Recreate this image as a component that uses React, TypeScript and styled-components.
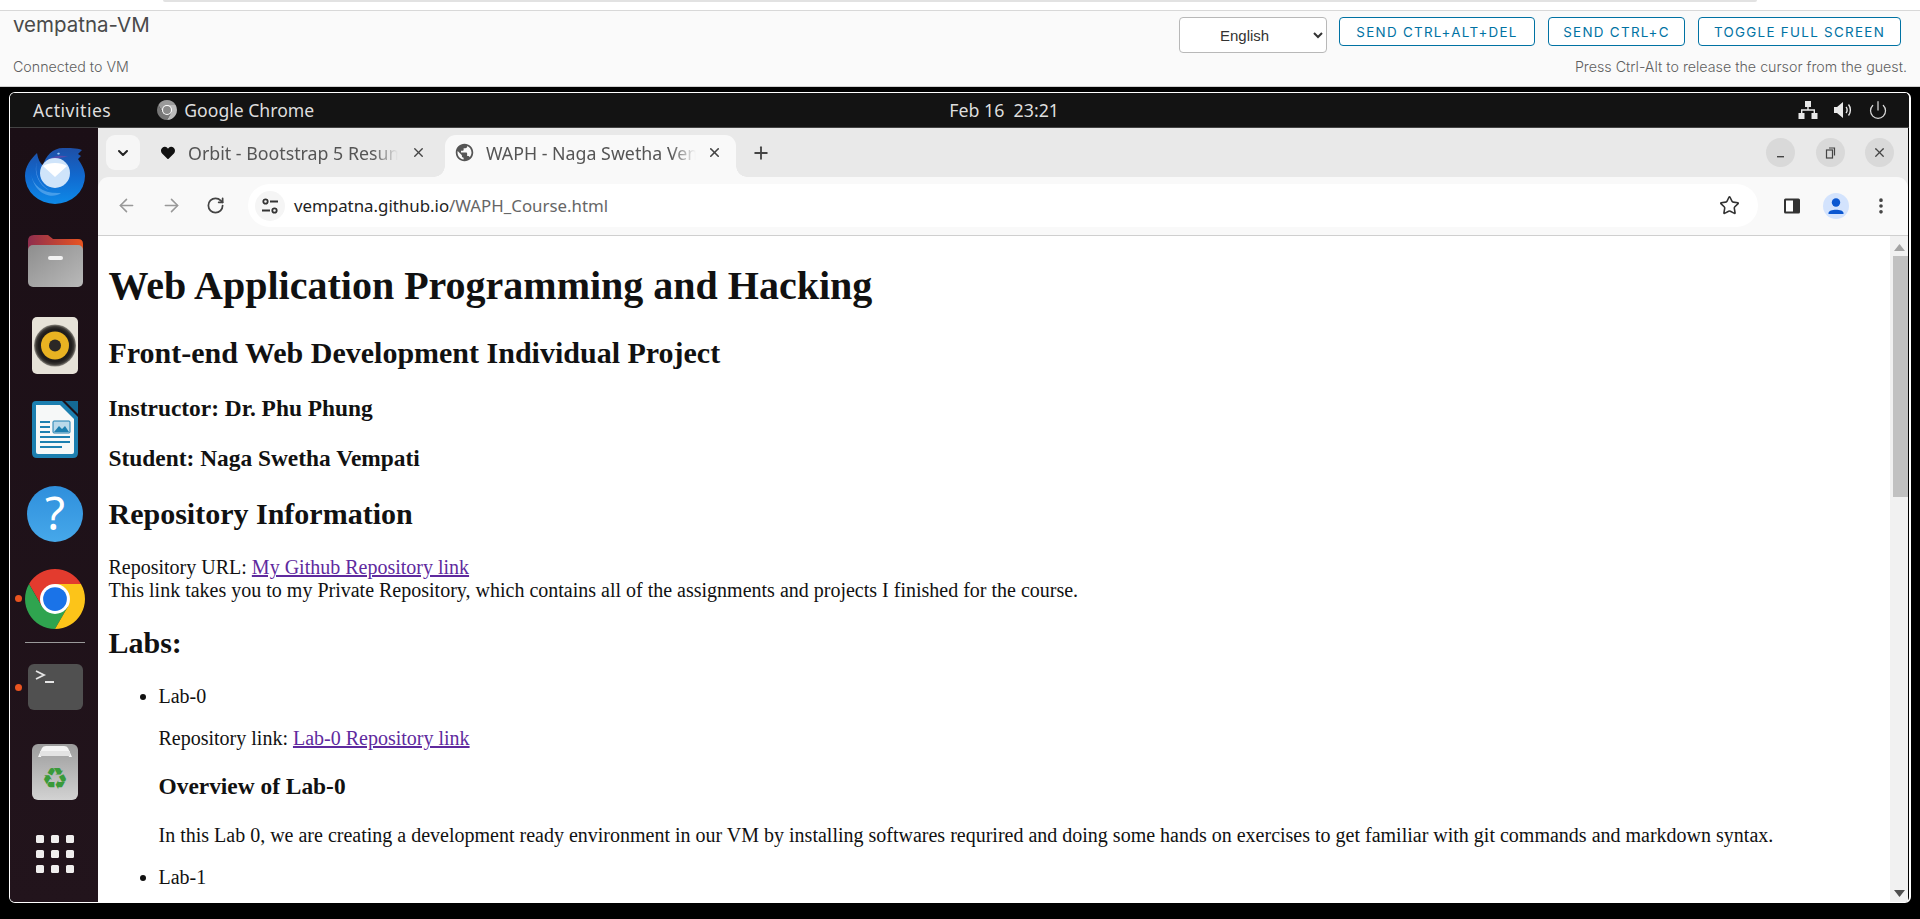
import React from "react";
import styled, { createGlobalStyle } from "styled-components";
import { ArrowLeft, ArrowRight, RotateCw, Star, X, Plus, ChevronDown, EllipsisVertical, Power } from "lucide-react";
import { FaHeart } from "react-icons/fa";
import { MdPublic } from "react-icons/md";

const Global = createGlobalStyle`
  html, body { margin: 0; padding: 0; height: 100%; background: #000; overflow: hidden; }
  * { box-sizing: border-box; }
`;

const Page = styled.div`
  width: 1920px; height: 919px; display: flex; flex-direction: column; background: #000; overflow: hidden;
  font-family: "Inter", "Liberation Sans", sans-serif;
`;
const TopStrip = styled.div`
  height: 11px; background: #fff; border-bottom: 1px solid #d8d8d8; padding: 0 163px 0 163px; flex: none;
`;
const TopPill = styled.div`
  height: 2px; background: #e2e2e2; border-radius: 0 0 6px 6px;
`;
const Header = styled.header`
  flex: none; height: 76px; background: #fafafa; border-bottom: 1px solid #d0d0d0; padding: 6px 13px 0;
  display: grid; grid-template-columns: 1fr auto; grid-template-rows: 42px 16px;
`;
const Title = styled.div`
  font-size: 20.5px; line-height: 16px; color: #4a4a4a; font-weight: 400;
`;
const Controls = styled.div`
  display: flex; align-items: flex-start; gap: 12px; padding-right: 5px;
`;
const LangSelect = styled.select`
  width: 148px; height: 36px; border: 1px solid #b8b8b8; border-radius: 4px; background: #fff; color: #333;
  font: 15px "Liberation Sans", sans-serif; padding-left: 36px;
`;
const VmButton = styled.button<{ $w: number }>`
  width: ${p => p.$w}px; height: 29px; border: 1px solid #0072a3; border-radius: 4px; background: #fff; color: #0072a3;
  font: 400 13.4px "Inter", "Liberation Sans", sans-serif; letter-spacing: 1.3px; padding: 0; margin-right: 1px; white-space: nowrap;
`;
const Status = styled.div`
  font-size: 14.25px; line-height: 16px; color: #5f5f5f; font-weight: 300;
`;
const Hint = styled(Status)`
  text-align: right;
`;
const Frame = styled.div`
  flex: none; width: 1902px; height: 811px; margin: 5px 0 0 9px; border: 1px solid #fff; border-right-width: 2px; border-radius: 6px;
  background: #000; display: flex; flex-direction: column; overflow: hidden;
`;
const GnomeBar = styled.div`
  flex: none; height: 34px; background: #131313; color: #dedede; display: flex; align-items: center;
  font: 17.6px "Noto Sans", sans-serif; padding-left: 23px;
`;
const ActivitiesLabel = styled.span`
  letter-spacing: 0.5px;
`;
const AppMenu = styled.div`
  display: flex; align-items: center; gap: 7px; margin-left: 46px;
`;
const Clock = styled.div`
  margin-left: 635px; white-space: pre; font-size: 17.8px;
`;
const Tray = styled.div`
  margin-left: auto; display: flex; align-items: center; gap: 15px; padding-right: 21px;
`;
const Desktop = styled.div`
  flex: 1; display: flex; min-height: 0; border-top: 1px solid #444; padding-right: 1px;
`;
const Dock = styled.nav`
  flex: none; width: 88px; background: linear-gradient(#1b0f16, #22141c); display: flex; flex-direction: column;
  align-items: center; padding-top: 6px;
`;
const Slot = styled.div<{ $h?: number }>`
  position: relative; width: 88px; height: ${p => p.$h ?? 84.5}px; padding-left: 2px; display: flex; align-items: center; justify-content: center; flex: none;
`;
const RunDot = styled.span`
  position: absolute; left: 5px; top: 50%; width: 7px; height: 7px; margin-top: -3.5px; border-radius: 50%; background: #e95420;
`;
const DockRule = styled.div`
  width: 60px; height: 1px; background: #9a9a9a; flex: none; margin: 1px 0 2px 2px;
`;
const AppGrid = styled.div`
  display: grid; grid-template-columns: repeat(3, 8px); grid-auto-rows: 8px; gap: 7px;
`;
const GridDot = styled.span`
  background: #f0eeee; border-radius: 1.5px;
`;
const Browser = styled.div`
  flex: 1; min-width: 0; display: flex; flex-direction: column; background: #e9e9e9;
`;
const TabStrip = styled.div`
  flex: none; height: 49px; background: #e9e9e9; display: flex; align-items: flex-end; padding-left: 8px;
  font: 17.8px "Noto Sans", sans-serif; color: #555;
`;
const TabSearch = styled.div`
  width: 34px; height: 35px; margin-bottom: 7px; border-radius: 9px; background: #f6f6f6; display: flex; align-items: center; justify-content: center; color: #222;
`;
const InactiveTab = styled.div`
  width: 305px; height: 42px; display: flex; align-items: center; padding: 0 0 7px 21px; gap: 13px;
`;
const ActiveTab = styled(InactiveTab)`
  position: relative; width: 291px; background: #f9f9f9; border-radius: 11px 11px 0 0; padding: 0 0 7px 9px; gap: 11px; margin-right: 15px;
  &::before, &::after { content: ""; position: absolute; bottom: 0; width: 11px; height: 11px; }
  &::before { left: -11px; background: radial-gradient(circle at 0 0, transparent 10.5px, #f9f9f9 11px); }
  &::after { right: -11px; background: radial-gradient(circle at 100% 0, transparent 10.5px, #f9f9f9 11px); }
`;
const TabLabel = styled.span<{ $w: number }>`
  width: ${p => p.$w}px; white-space: nowrap; overflow: hidden; flex: none;
  mask-image: linear-gradient(to right, #000 88%, transparent);
`;
const NewTab = styled.div`
  display: flex; height: 42px; padding-bottom: 7px; align-items: center; color: #444;
`;
const WindowButtons = styled.div`
  margin-left: auto; display: flex; align-items: center; gap: 20.5px; height: 49px; padding-right: 14px;
`;
const WinBtn = styled.div`
  width: 29px; height: 29px; border-radius: 50%; background: #d9d9d9; display: flex; align-items: center; justify-content: center; color: #444;
`;
const Toolbar = styled.div`
  flex: none; height: 59px; background: #f9f9f9; border-radius: 11px 11px 0 0; border-bottom: 1px solid #cfcfcf; display: flex; align-items: center; color: #444;
  padding: 0 0 1px 18px;
`;
const NavIcons = styled.div`
  display: flex; gap: 24px; align-items: center; width: 132px;
`;
const NavIcon = styled.span<{ $dim?: boolean }>`
  display: flex; color: ${p => p.$dim ? "#999" : "#444"};
`;
const Omnibox = styled.div`
  width: 1510px; height: 43px; border-radius: 22px; background: #fff; display: flex; align-items: center; padding: 0 18px 0 7px;
  font: 16.85px "Noto Sans", sans-serif; flex: none;
`;
const TuneChip = styled.span`
  width: 30px; height: 30px; border-radius: 50%; background: #f5f5f5; display: flex; align-items: center; justify-content: center; flex: none;
`;
const Url = styled.span`
  color: #222; margin-left: 9px; flex: 1;
`;
const UrlPath = styled.span`
  color: #666;
`;
const ToolIcons = styled.div`
  display: flex; align-items: center; gap: 22px; margin-left: 25px;
`;
const Viewport = styled.div`
  flex: 1; min-height: 0; display: flex; background: #fff;
`;
const Doc = styled.main`
  flex: 1; min-width: 0; overflow: hidden; padding: 0 10.5px; color: #111;
  font: 20px/22.5px "Liberation Serif", serif;
  a { color: #5f2a9e; }
`;
const H1 = styled.h1`
  font-size: 40px; line-height: 46px; margin: 27px 0;
`;
const H2 = styled.h2`
  font-size: 30px; line-height: 34px; margin: 25px 0;
`;
const H3 = styled.h3`
  font-size: 23.4px; line-height: 27px; margin: 23.4px 0;
`;
const Para = styled.p`
  margin: 19.5px 0;
`;
const List = styled.ul`
  margin: 20px 0; padding-left: 50px;
`;
const Scrollbar = styled.div`
  flex: none; width: 18px; background: #f1f1f1; display: flex; flex-direction: column; align-items: flex-end;
`;
const ScrollArrow = styled.div`
  flex: none; width: 18px; height: 20px; padding-top: 2px; display: flex; align-items: center; justify-content: center;
`;
const Thumb = styled.div`
  flex: none; width: 15px; height: 241px; background: #c1c1c1;
`;
const Spacer = styled.div`
  flex: 1;
`;

const Thunderbird = () => (
  <svg width="60" height="56" viewBox="0 0 60 56">
    <defs>
      <linearGradient id="tb" x1="0" y1="0" x2="0" y2="1"><stop offset="0" stopColor="#1e4fa6" /><stop offset=".5" stopColor="#1169cf" /><stop offset="1" stopColor="#0e8ae8" /></linearGradient>
    </defs>
    <path d="M12 5C13 11 15 15 18 18C20 8 28 0 38 0C44 0 52 0 57 2L53 6L56 8L53 11C57 17 60 22 60 28A30 28 0 0 1 0 28C0 18 6 11 12 5Z" fill="url(#tb)" />
    <path d="M19 16C24 9 34 6 43 9C38 9 31 10 26 14C23 16 20 17 19 16Z" fill="#6a4aa8" opacity=".75" />
    <path d="M32 5.500l2-1 1 1.500-2 .8Z" fill="#9ecbf5" />
    <circle cx="30" cy="25" r="15" fill="#cfe4fa" />
    <path d="M18 18C24 14 36 14 42 18L30 29Z" fill="#fff" />
    <path d="M6 26C8 38 18 46 36 45C28 51 10 48 6 26Z" fill="#7dbdf5" opacity=".5" />
    <path d="M12 14C9 24 14 36 24 42C15 38 8 26 12 14Z" fill="#6aa6ee" opacity=".7" />
  </svg>
);
const Folder = () => (
  <svg width="55" height="52" viewBox="0 0 55 52">
    <defs>
      <linearGradient id="ft" x1="0" y1="0" x2="1" y2="0"><stop offset="0" stopColor="#8f2e4e" /><stop offset="1" stopColor="#e95420" /></linearGradient>
      <linearGradient id="fb" x1="0" y1="0" x2="1" y2="1"><stop offset="0" stopColor="#8e8e8e" /><stop offset="1" stopColor="#b9b9b9" /></linearGradient>
    </defs>
    <path d="M0 6Q0 0 6 0H20L25 4H50Q55 4 55 9V30H0Z" fill="url(#ft)" />
    <rect x="0" y="10" width="55" height="42" rx="5" fill="url(#fb)" />
    <rect x="20" y="21" width="15" height="4" rx="2" fill="#f2f2f2" />
  </svg>
);
const Rhythmbox = () => (
  <svg width="46" height="57" viewBox="0 0 46 57">
    <defs>
      <radialGradient id="rb"><stop offset=".78" stopColor="#1f1d1c" /><stop offset=".9" stopColor="#3a3733" /><stop offset="1" stopColor="#8d8a82" /></radialGradient>
    </defs>
    <rect width="46" height="57" rx="5" fill="#e6e2d8" />
    <circle cx="23" cy="28.500" r="21" fill="url(#rb)" />
    <circle cx="23" cy="28.500" r="14" fill="#e9b322" />
    <circle cx="23" cy="28.500" r="6" fill="#2b2826" />
  </svg>
);
const Writer = () => (
  <svg width="46" height="57" viewBox="0 0 46 57">
    <path d="M4 0H30L46 16V52Q46 57 41 57H5Q0 57 0 52V4Q0 0 4 0Z" fill="#1c7fb0" />
    <path d="M4 4H28L42 18V51Q42 53 40 53H6Q4 53 4 51Z" fill="#f6f8f8" />
    <path d="M33 0H46V13Z" fill="#146a95" />
    <g fill="#1c7fb0">
      <rect x="8" y="20" width="10" height="2" /><rect x="8" y="25" width="10" height="2" /><rect x="8" y="30" width="10" height="2" />
      <rect x="8" y="35" width="30" height="2" /><rect x="8" y="40" width="30" height="2" /><rect x="8" y="45" width="22" height="2" />
    </g>
    <rect x="21" y="20" width="17" height="12" rx="1" fill="#b9d9ea" stroke="#1c7fb0" strokeWidth="1" />
    <path d="M22 31L27 25L30 28L33 25L37 31Z" fill="#1c7fb0" />
  </svg>
);
const Help = () => (
  <svg width="56" height="56" viewBox="0 0 56 56">
    <defs><linearGradient id="hp" x1="0" y1="0" x2="0" y2="1"><stop offset="0" stopColor="#2f8fdc" /><stop offset="1" stopColor="#46a8ea" /></linearGradient></defs>
    <circle cx="28" cy="28" r="28" fill="url(#hp)" />
    <text x="28" y="44" textAnchor="middle" fontFamily="'Noto Sans', sans-serif" fontSize="46" fill="#fff">?</text>
  </svg>
);
const ChromeLogo = ({ size, mono }: { size: number; mono?: boolean }) => (
  <svg width={size} height={size} viewBox="0 0 48 48">
    <path d="M44.780 12A24 24 0 0 0 3.220 12L13.600 30L24 24V12Z" fill={mono ? "#9a9a9a" : "#e33b2e"} />
    <path d="M3.220 12A24 24 0 0 0 24 48L34.390 30L24 24L13.600 30Z" fill={mono ? "#777" : "#2fa44f"} />
    <path d="M24 48A24 24 0 0 0 44.780 12H24V24L34.390 30Z" fill={mono ? "#bbb" : "#fcc419"} />
    <circle cx="24" cy="24" r="12" fill="#fff" />
    <circle cx="24" cy="24" r="9.500" fill={mono ? "#8a8a8a" : "#1a73e8"} />
  </svg>
);
const Terminal = () => (
  <svg width="55" height="46" viewBox="0 0 55 46">
    <rect width="55" height="46" rx="6" fill="#505050" />
    <path d="M8 7L16 11L8 15" fill="none" stroke="#e6e6e6" strokeWidth="1.800" />
    <rect x="17" y="17" width="9" height="2" fill="#e6e6e6" />
  </svg>
);
const Trash = () => (
  <svg width="46" height="56" viewBox="0 0 46 56">
    <defs><linearGradient id="tr" x1="0" y1="0" x2="0" y2="1"><stop offset="0" stopColor="#9c9c9c" /><stop offset="1" stopColor="#d2d2d2" /></linearGradient></defs>
    <rect width="46" height="56" rx="6" fill="url(#tr)" />
    <path d="M6 13L10 4Q11 2 14 2H32Q35 2 36 4L40 13H37L35 7H11L9 13Z" fill="#f4f4f4" />
    <rect x="8" y="7" width="30" height="5" fill="#e3e3e3" />
    <text x="23" y="45" textAnchor="middle" fontFamily="'DejaVu Sans', sans-serif" fontSize="30" fill="#3a9a3a">♻</text>
  </svg>
);
const TuneIcon = () => (
  <svg width="18" height="18" viewBox="0 0 18 18" fill="none" stroke="#333" strokeWidth="1.800">
    <circle cx="4.500" cy="4.500" r="2.200" /><path d="M9 4.500H17" /><circle cx="13.500" cy="13.500" r="2.200" /><path d="M1 13.500H9" />
  </svg>
);
const PanelIcon = () => (
  <svg width="18" height="18" viewBox="0 0 18 18">
    <rect x="1" y="1.500" width="16" height="15" rx="1.500" fill="#333" />
    <rect x="3" y="3.500" width="7" height="11" fill="#fff" />
  </svg>
);
const ProfileIcon = () => (
  <svg width="26" height="26" viewBox="0 0 26 26">
    <circle cx="13" cy="13" r="13" fill="#d3e3fd" />
    <circle cx="13" cy="9.500" r="4.200" fill="#0b57d0" />
    <path d="M5.500 20C5.500 15.500 20.500 15.500 20.500 20V21H5.500Z" fill="#0b57d0" />
  </svg>
);
const NetworkIcon = () => (
  <svg width="20" height="20" viewBox="0 0 20 20" fill="#e8e8e8">
    <rect x="7" y="1" width="6" height="6" /><rect x="0.500" y="13" width="6" height="6" /><rect x="13.500" y="13" width="6" height="6" />
    <path d="M9.300 7H10.700V9.300H17V13H15.600V10.700H4.400V13H3V9.300H9.300Z" />
  </svg>
);
const SpeakerIcon = () => (
  <svg width="20" height="20" viewBox="0 0 20 20" fill="none">
    <path d="M1 7H4L10 2V18L4 13H1Z" fill="#e8e8e8" />
    <path d="M13 7C14.500 8.500 14.500 11.500 13 13M15.500 4.500C18 7.500 18 12.500 15.500 15.500" stroke="#e8e8e8" strokeWidth="1.400" />
  </svg>
);
const MinimizeIcon = () => (
  <svg width="13" height="13" viewBox="0 0 13 13"><rect x="3" y="10" width="7" height="1.400" fill="#444" /></svg>
);
const RestoreIcon = () => (
  <svg width="13" height="13" viewBox="0 0 13 13" fill="none" stroke="#444" strokeWidth="1.200">
    <rect x="2.500" y="4" width="6" height="8" /><path d="M5 2H10.500V9.500" />
  </svg>
);
const TriUp = () => <svg width="11" height="7" viewBox="0 0 11 7"><path d="M5.500 0L11 7H0Z" fill="#a3a3a3" /></svg>;
const TriDown = () => <svg width="11" height="7" viewBox="0 0 11 7"><path d="M0 0H11L5.500 7Z" fill="#505050" /></svg>;

export default function App() {
  return (
    <Page>
      <Global />
      <TopStrip><TopPill /></TopStrip>
      <Header>
        <Title>vempatna-VM</Title>
        <Controls>
          <LangSelect defaultValue="English"><option>English</option></LangSelect>
          <VmButton $w={196}>SEND CTRL+ALT+DEL</VmButton>
          <VmButton $w={137}>SEND CTRL+C</VmButton>
          <VmButton $w={203}>TOGGLE FULL SCREEN</VmButton>
        </Controls>
        <Status>Connected to VM</Status>
        <Hint>Press Ctrl-Alt to release the cursor from the guest.</Hint>
      </Header>
      <Frame>
        <GnomeBar>
          <ActivitiesLabel>Activities</ActivitiesLabel>
          <AppMenu><ChromeLogo size={20} mono /><span>Google Chrome</span></AppMenu>
          <Clock>Feb 16  23:21</Clock>
          <Tray><NetworkIcon /><SpeakerIcon /><Power size={20} strokeWidth={1.5} color="#d8d8d8" /></Tray>
        </GnomeBar>
        <Desktop>
          <Dock>
            <Slot><Thunderbird /></Slot>
            <Slot><Folder /></Slot>
            <Slot><Rhythmbox /></Slot>
            <Slot><Writer /></Slot>
            <Slot><Help /></Slot>
            <Slot $h={84}><RunDot /><ChromeLogo size={60} /></Slot>
            <DockRule />
            <Slot $h={85}><RunDot /><Terminal /></Slot>
            <Slot><Trash /></Slot>
            <Slot $h={80}>
              <AppGrid>{Array.from({ length: 9 }, (_, i) => <GridDot key={i} />)}</AppGrid>
            </Slot>
          </Dock>
          <Browser>
            <TabStrip>
              <TabSearch><ChevronDown size={16} strokeWidth={3} /></TabSearch>
              <InactiveTab>
                <FaHeart size={14} color="#111" />
                <TabLabel $w={210}>Orbit - Bootstrap 5 Resume/CV</TabLabel>
                <X size={15} strokeWidth={2.2} color="#444" />
              </InactiveTab>
              <ActiveTab>
                <MdPublic size={21} color="#555" />
                <TabLabel $w={210}>WAPH - Naga Swetha Vempati</TabLabel>
                <X size={15} strokeWidth={2.5} color="#444" />
              </ActiveTab>
              <NewTab><Plus size={20} strokeWidth={2.2} /></NewTab>
              <WindowButtons>
                <WinBtn><MinimizeIcon /></WinBtn>
                <WinBtn><RestoreIcon /></WinBtn>
                <WinBtn><X size={15} /></WinBtn>
              </WindowButtons>
            </TabStrip>
            <Toolbar>
              <NavIcons>
                <NavIcon $dim><ArrowLeft size={21} strokeWidth={1.8} /></NavIcon>
                <NavIcon $dim><ArrowRight size={21} strokeWidth={1.8} /></NavIcon>
                <NavIcon><RotateCw size={19} strokeWidth={2.2} /></NavIcon>
              </NavIcons>
              <Omnibox>
                <TuneChip><TuneIcon /></TuneChip>
                <Url>vempatna.github.io<UrlPath>/WAPH_Course.html</UrlPath></Url>
                <Star size={21} strokeWidth={1.8} color="#333" />
              </Omnibox>
              <ToolIcons>
                <PanelIcon />
                <ProfileIcon />
                <EllipsisVertical size={20} strokeWidth={2.4} />
              </ToolIcons>
            </Toolbar>
            <Viewport>
              <Doc>
                <H1>Web Application Programming and Hacking</H1>
                <H2>Front-end Web Development Individual Project</H2>
                <H3>Instructor: Dr. Phu Phung</H3>
                <H3>Student: Naga Swetha Vempati</H3>
                <H2>Repository Information</H2>
                <div>
                  Repository URL: <a href="#r">My Github Repository link</a><br />
                  This link takes you to my Private Repository, which contains all of the assignments and projects I finished for the course.
                </div>
                <H2>Labs:</H2>
                <List>
                  <li>
                    Lab-0
                    <Para>Repository link: <a href="#l">Lab-0 Repository link</a></Para>
                    <H3>Overview of Lab-0</H3>
                    <Para>In this Lab 0, we are creating a development ready environment in our VM by installing softwares requrired and doing some hands on exercises to get familiar with git commands and markdown syntax.</Para>
                  </li>
                  <li>Lab-1</li>
                </List>
              </Doc>
              <Scrollbar>
                <ScrollArrow><TriUp /></ScrollArrow>
                <Thumb />
                <Spacer />
                <ScrollArrow><TriDown /></ScrollArrow>
              </Scrollbar>
            </Viewport>
          </Browser>
        </Desktop>
      </Frame>
    </Page>
  );
}
